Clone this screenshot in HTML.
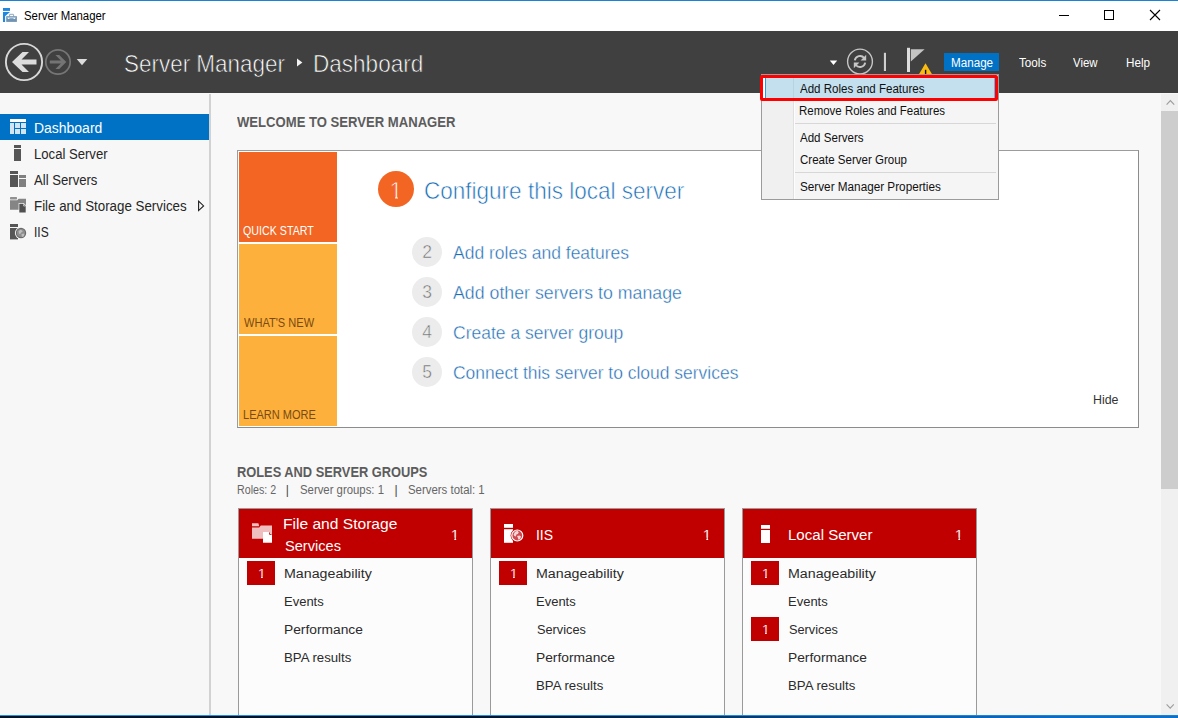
<!DOCTYPE html>
<html lang="en"><head><meta charset="utf-8">
<title>Server Manager</title>
<style>
html,body{margin:0;padding:0;background:#f8f8f8;overflow:hidden}
#app{position:relative;width:1178px;height:718px;overflow:hidden;background:#f8f8f8;font-family:"Liberation Sans",sans-serif}
#app div,#app svg{position:absolute}
.t{position:absolute;transform-origin:0 0;white-space:nowrap;line-height:1;font-family:"Liberation Sans",sans-serif}
/* window chrome */
#topline{left:0;top:0;width:1178px;height:1px;background:#1883d7}
#titlebar{left:0;top:1px;width:1178px;height:30px;background:#fff}
#header{left:0;top:31px;width:1178px;height:62px;background:#404040}
#manage{left:944px;top:53px;width:55px;height:18px;background:#0072c6}
/* sidebar */
#side{left:0;top:94px;width:209px;height:621px;background:#f7f7f7}
#sidesel{left:0;top:114px;width:209px;height:26px;background:#0072c6}
#sideline{left:209px;top:94px;width:2px;height:621px;background:#d2d2d2}
/* main */
#welcome{left:237px;top:150px;width:900px;height:276px;background:#fff;border:1px solid #9c9c9c;border-right-color:#8c8c8c;border-bottom-color:#8c8c8c}
.q{left:239px;width:98px;height:90px}
#q1{top:152px;background:#f26522}
#q2{top:244px;background:#fdb03b}
#q3{top:336px;background:#fdb03b}
.c{border-radius:50%}
#c1{left:378px;top:171px;width:36px;height:36px;background:#f26522}
.cn{left:412px;width:30px;height:30px;background:#ececec}
/* tiles */
.tile{top:508px;width:233px;height:220px;background:#fcfcfc;border:1px solid #9a9a9a}
.th{top:509px;width:233px;height:49px;background:#c00000}
.bd{width:28px;height:24px;background:#c00000}
/* scrollbar */
#sb{left:1161px;top:94px;width:17px;height:621px;background:#f0f0f0}
#sbt{left:1161px;top:111px;width:17px;height:378px;background:#cdcdcd}
/* bottom strip */
#b1{left:0;top:715px;width:1178px;height:1px;background:linear-gradient(90deg,#2b8ce0 0,#2b8ce0 55%,#1a7fd6 100%)}
#b2{left:0;top:716px;width:1178px;height:2px;background:linear-gradient(90deg,#00132b 0,#00142d 40%,#02284f 55%,#054685 68%,#0860b0 80%,#0a6cc4 90%,#0b70ca 100%)}
/* dropdown */
#menu{left:761px;top:74px;width:236px;height:124px;background:#f5f5f5;border:1px solid #9b9b9b}
#mgutbg{left:762px;top:75px;width:31px;height:124px;background:#f0f0f0}
#mgut{left:793px;top:75px;width:1px;height:124px;background:#e0e0e0}
#mgut2{left:794px;top:75px;width:1px;height:124px;background:#fdfdfd}
#mhlw{left:763px;top:78px;width:3px;height:20px;background:#fff}
#mhl{left:765px;top:78px;width:228px;height:20px;background:#c4dfee;border-left:1px solid #26a0da;border-right:1px solid #58b8f0}
#mhlg{left:793px;top:78px;width:1px;height:20px;background:#b4d3e4}
.ms{left:795px;width:201px;height:1px;background:#d7d7d7}
#mred{left:760px;top:75px;width:232px;height:20px;border:3px solid #fe0000;border-radius:2px}

</style></head>
<body>
<div id="app">
<!-- window chrome -->
<div id="topline"></div>
<div id="titlebar"></div>
<div id="header"></div>
<div id="manage"></div>

<!-- sidebar -->
<div id="side"></div>
<div id="sidesel"></div>
<div id="sideline"></div>

<!-- welcome panel -->
<div id="welcome"></div>
<div class="q" id="q1"></div>
<div class="q" id="q2"></div>
<div class="q" id="q3"></div>
<div class="c" id="c1"></div>
<div class="c cn" style="top:237px"></div>
<div class="c cn" style="top:277px"></div>
<div class="c cn" style="top:317px"></div>
<div class="c cn" style="top:357px"></div>

<!-- role tiles -->
<div class="tile" style="left:238px"></div>
<div class="tile" style="left:490px"></div>
<div class="tile" style="left:742px"></div>
<div class="th" style="left:239px"></div>
<div class="th" style="left:491px"></div>
<div class="th" style="left:743px"></div>
<div class="bd" style="left:247px;top:561px"></div>
<div class="bd" style="left:499px;top:561px"></div>
<div class="bd" style="left:751px;top:561px"></div>
<div class="bd" style="left:751px;top:617px"></div>

<!-- scrollbar -->
<div id="sb"></div>
<div id="sbt"></div>

<!-- bottom strip -->
<div id="b1"></div>
<div id="b2"></div>

<!-- icons -->
<svg id="icons" width="1178" height="718" viewBox="0 0 1178 718" style="left:0;top:0">
  <!-- title bar app icon -->
  <g>
    <rect x="3" y="8" width="7" height="2.9" fill="#1e88e0"/>
    <path d="M3 11.9h7l-4.7 4H5.1v6H3z" fill="#1e88e0"/>
    <rect x="6.2" y="16.2" width="10.7" height="5.7" fill="#6f93b3"/>
    <path d="M9.6 16.4v-1.7q0-.4.4-.4h3.2q.4 0 .4.4v1.7" fill="none" stroke="#7d9dba" stroke-width="0.9"/>
    <path d="M7.2 17.4h8.6l-.9 1.7h-1.1l-.4-.8H9.6l-.4.8H8.1z" fill="#f4f7fa"/>
  </g>
  <!-- window buttons -->
  <path d="M1059 15.5h10" stroke="#000" stroke-width="1" fill="none"/>
  <rect x="1104.5" y="10.5" width="9" height="9" stroke="#000" stroke-width="1" fill="none"/>
  <path d="M1150 10l10 10M1160 10l-10 10" stroke="#000" stroke-width="1.1" fill="none"/>

  <!-- back -->
  <circle cx="24" cy="62" r="18.1" fill="none" stroke="#d8d8d8" stroke-width="1.9"/>
  <path d="M12 62l10.5-10h6.5l-7.5 7.5h15v5h-15l7.5 7.5h-6.5z" fill="#dcdcdc"/>
  <!-- forward -->
  <circle cx="58" cy="62" r="12.2" fill="none" stroke="#767676" stroke-width="1.7"/>
  <path d="M66.3 62l-7.1-7.1h-3.8l5.5 5.6H49.8v3h11.1l-5.5 5.6h3.8z" fill="#747474"/>
  <!-- history dropdown -->
  <path d="M76.7 59h10.6l-5.3 6.2z" fill="#dcdcdc"/>
  <!-- breadcrumb separator -->
  <path d="M297 58.4l5.4 4-5.4 4z" fill="#f2f2f2"/>

  <!-- header tools -->
  <path d="M829.8 60.6h7.4l-3.7 4.4z" fill="#fff"/>
  <circle cx="860" cy="61.5" r="12.4" fill="none" stroke="#c6c6c6" stroke-width="1.4"/>
  <path d="M854.8 60.4a5.3 5.3 0 0 1 9.4-2.4" fill="none" stroke="#c6c6c6" stroke-width="1.9"/>
  <path d="M866.2 54.8v5.6h-5.6z" fill="#c6c6c6"/>
  <path d="M865.2 62.6a5.3 5.3 0 0 1-9.4 2.4" fill="none" stroke="#c6c6c6" stroke-width="1.9"/>
  <path d="M853.8 68.2v-5.6h5.6z" fill="#c6c6c6"/>
  <rect x="883.9" y="52.8" width="2.1" height="18.2" fill="#cfcfcf"/>
  <rect x="907" y="47.8" width="3" height="24.2" fill="#dedede"/>
  <path d="M910.8 49.2h13.8l-13.8 12.2z" fill="#c4c4c4"/>
  <path d="M925.5 63.3l7 11.7h-14z" fill="#fbbc11"/>
  <rect x="924.9" y="69.8" width="1.4" height="4.4" fill="#111"/>

  <!-- sidebar icons -->
  <g fill="#d3e5f3">
    <rect x="10" y="119" width="16" height="3" fill="#fff"/>
    <rect x="10" y="123" width="4" height="11"/>
    <rect x="15" y="123" width="5" height="5"/>
    <rect x="21" y="123" width="5" height="5"/>
    <rect x="15" y="129" width="5" height="5"/>
    <rect x="21" y="129" width="5" height="5"/>
  </g>
  <g fill="#565656">
    <rect x="14" y="145" width="7" height="3"/>
    <rect x="14" y="149" width="7" height="12"/>
  </g>
  <g>
    <rect x="10" y="171" width="8" height="3" fill="#565656"/>
    <rect x="10" y="175" width="8" height="12" fill="#565656"/>
    <rect x="19" y="175" width="7" height="3" fill="#808080"/>
    <rect x="19" y="179" width="7" height="8" fill="#808080"/>
  </g>
  <g>
    <rect x="10" y="197" width="7" height="2.4" rx="0.6" fill="#919191"/>
    <path d="M10 200.2h7.2l1.4-1.5H26v11H10z" fill="#858585"/>
    <path d="M18.6 203h5l2.8 2.8v7.4h-7.8z" fill="#f7f7f7"/>
    <path d="M19.3 203.7h4l2.4 2.4v6.4h-6.4z" fill="#505050"/>
    <path d="M23.6 204.2v1.8h1.8" fill="none" stroke="#e8e8e8" stroke-width="0.7"/>
  </g>
  <g>
    <rect x="10" y="224" width="8" height="3" fill="#565656"/>
    <rect x="10" y="228" width="8" height="11.4" fill="#565656"/>
    <circle cx="21" cy="233" r="6.1" fill="#f7f7f7"/>
    <circle cx="21" cy="233" r="5.2" fill="#6a6a6a"/>
    <circle cx="21" cy="233" r="4.1" fill="#8e8e8e"/>
    <path d="M18.6 231.2l1.8-1.4 1.8.6.4 1.4-1.4.8-1.2 1.6-1-.6zM21.4 234.2l2-.6 1 1-.8 1.8-1.6.6z" fill="#bdbdbd"/>
  </g>
  <path d="M198.6 201.2l5 4.7-5 4.7z" fill="none" stroke="#1f1f1f" stroke-width="1.1"/>

  <!-- tile header icons -->
  <g>
    <path d="M252 523.2h6.4l.8 3h-7.2z" fill="#efbfbf"/>
    <path d="M252 527.4h7.2l1.6-1.8H272v13.2h-20z" fill="#efbfbf"/>
    <path d="M263 532h6.4l2.6 2.6v8.2h-9z" fill="#fff"/>
    <path d="M269.6 532.4v2h2" fill="none" stroke="#c00000" stroke-width="0.9"/>
  </g>
  <g>
    <rect x="504" y="524" width="9" height="3.8" fill="#fff"/>
    <rect x="504" y="529.2" width="9" height="13.6" fill="#fff"/>
    <circle cx="517.3" cy="535.5" r="6.7" fill="#c00000"/>
    <circle cx="517.3" cy="535.5" r="5.5" fill="#cf4a50" stroke="#fff" stroke-width="1.2"/>
    <path d="M513.6 534.4l1.4-2.6 2.6-1 1.2 1.6-1 1.6-1.4.6-.6 1.8-1.4-.4zM517 536l2.4-.6 1.6 1-.8 2.4-1.8 1-.6-2.2z" fill="#f6d5d6"/>
  </g>
  <g fill="#fff">
    <rect x="761" y="525" width="9" height="3.8"/>
    <rect x="761" y="530" width="9" height="13"/>
  </g>

  <!-- scrollbar arrows -->
  <path d="M1166.6 104.6l3.8-3.9 3.8 3.9" fill="none" stroke="#9d9d9d" stroke-width="1.2"/>
  <path d="M1166.6 704.4l3.6 3.7 3.6-3.7" fill="none" stroke="#9d9d9d" stroke-width="1.1"/>
</svg>

<!-- Manage dropdown -->
<div id="menu"></div>
<div id="mgutbg"></div>
<div id="mgut"></div>
<div id="mgut2"></div>
<div id="mhlw"></div>
<div id="mhl"></div>
<div id="mhlg"></div>
<div class="ms" style="top:123px"></div>
<div class="ms" style="top:172px"></div>
<div id="mred"></div>

<!-- text layer -->
<span class="t" style="left:23.50px;top:10px;font-size:12px;color:#000;transform:scaleX(0.9484);">Server Manager</span>
<span class="t" style="left:123.65px;top:52px;font-size:24px;color:#ffffff;transform:scaleX(0.9354);-webkit-text-stroke:0.65px #404040;">Server Manager</span>
<span class="t" style="left:312.95px;top:52px;font-size:24px;color:#ffffff;transform:scaleX(0.9389);-webkit-text-stroke:0.65px #404040;">Dashboard</span>
<span class="t" style="left:950.80px;top:57px;font-size:12px;color:#fff;transform:scaleX(0.9704);">Manage</span>
<span class="t" style="left:1018.80px;top:57px;font-size:12px;color:#fff;transform:scaleX(0.9745);">Tools</span>
<span class="t" style="left:1072.80px;top:57px;font-size:12px;color:#fff;transform:scaleX(0.9492);">View</span>
<span class="t" style="left:1126.10px;top:57px;font-size:12px;color:#fff;transform:scaleX(0.9758);">Help</span>
<span class="t" style="left:33.89px;top:122px;font-size:13.8px;color:#fff;transform:scaleX(1.0118);">Dashboard</span>
<span class="t" style="left:33.95px;top:148px;font-size:13.8px;color:#262626;transform:scaleX(0.9498);">Local Server</span>
<span class="t" style="left:34.40px;top:174px;font-size:13.8px;color:#262626;transform:scaleX(0.9506);">All Servers</span>
<span class="t" style="left:33.93px;top:200px;font-size:13.8px;color:#262626;transform:scaleX(0.9664);">File and Storage Services</span>
<span class="t" style="left:34.03px;top:226px;font-size:13.8px;color:#262626;transform:scaleX(0.8681);">IIS</span>
<span class="t" style="left:236.70px;top:116px;font-size:13.8px;color:#5c5c5c;font-weight:700;transform:scaleX(0.9489);">WELCOME TO SERVER MANAGER</span>
<span class="t" style="left:236.70px;top:466px;font-size:13.8px;color:#5c5c5c;font-weight:700;transform:scaleX(0.9302);">ROLES AND SERVER GROUPS</span>
<span class="t" style="left:236.70px;top:484px;font-size:12px;color:#666;transform:scaleX(0.8884);">Roles: 2</span>
<span class="t" style="left:285.80px;top:484px;font-size:12px;color:#444;">|</span>
<span class="t" style="left:299.70px;top:484px;font-size:12px;color:#666;transform:scaleX(0.9468);">Server groups: 1</span>
<span class="t" style="left:394.40px;top:484px;font-size:12px;color:#444;">|</span>
<span class="t" style="left:407.90px;top:484px;font-size:12px;color:#666;transform:scaleX(0.9503);">Servers total: 1</span>
<span class="t" style="left:243.00px;top:225px;font-size:12.8px;color:#fff;transform:scaleX(0.8350);">QUICK START</span>
<span class="t" style="left:243.60px;top:317px;font-size:12.8px;color:#7a4a12;transform:scaleX(0.8643);">WHAT&#39;S NEW</span>
<span class="t" style="left:242.74px;top:409px;font-size:12.8px;color:#7a4a12;transform:scaleX(0.8618);">LEARN MORE</span>
<span class="t" style="left:423.66px;top:179px;font-size:24px;color:#1a6fb8;transform:scaleX(0.9383);-webkit-text-stroke:0.6px #fff;">Configure this local server</span>
<span class="t" style="left:452.77px;top:244px;font-size:18.3px;color:#1c6db5;transform:scaleX(0.9567);-webkit-text-stroke:0.38px #fff;">Add roles and features</span>
<span class="t" style="left:452.77px;top:284px;font-size:18.3px;color:#1c6db5;transform:scaleX(0.9710);-webkit-text-stroke:0.38px #fff;">Add other servers to manage</span>
<span class="t" style="left:452.77px;top:324px;font-size:18.3px;color:#1c6db5;transform:scaleX(0.9572);-webkit-text-stroke:0.38px #fff;">Create a server group</span>
<span class="t" style="left:452.77px;top:364px;font-size:18.3px;color:#1c6db5;transform:scaleX(0.9554);-webkit-text-stroke:0.38px #fff;">Connect this server to cloud services</span>
<span class="t" style="left:1092.51px;top:394px;font-size:12.5px;color:#333;transform:scaleX(0.9897);">Hide</span>
<span class="t" style="left:800.20px;top:83px;font-size:12.3px;color:#111;transform:scaleX(0.9391);">Add Roles and Features</span>
<span class="t" style="left:799.27px;top:105px;font-size:12.3px;color:#111;transform:scaleX(0.9332);">Remove Roles and Features</span>
<span class="t" style="left:800.20px;top:132px;font-size:12.3px;color:#111;transform:scaleX(0.9391);">Add Servers</span>
<span class="t" style="left:800.20px;top:154px;font-size:12.3px;color:#111;transform:scaleX(0.9370);">Create Server Group</span>
<span class="t" style="left:800.20px;top:181px;font-size:12.3px;color:#111;transform:scaleX(0.9540);">Server Manager Properties</span>
<span class="t" style="left:283.56px;top:567px;font-size:13.7px;color:#2b2b2b;transform:scaleX(1.0393);">Manageability</span>
<span class="t" style="left:283.65px;top:595px;font-size:13.7px;color:#2b2b2b;transform:scaleX(0.9488);">Events</span>
<span class="t" style="left:283.59px;top:623px;font-size:13.7px;color:#2b2b2b;transform:scaleX(1.0073);">Performance</span>
<span class="t" style="left:283.64px;top:651px;font-size:13.7px;color:#2b2b2b;transform:scaleX(0.9649);">BPA results</span>
<span class="t" style="left:535.56px;top:567px;font-size:13.7px;color:#2b2b2b;transform:scaleX(1.0393);">Manageability</span>
<span class="t" style="left:535.65px;top:595px;font-size:13.7px;color:#2b2b2b;transform:scaleX(0.9488);">Events</span>
<span class="t" style="left:536.60px;top:623px;font-size:13.7px;color:#2b2b2b;transform:scaleX(0.9308);">Services</span>
<span class="t" style="left:535.59px;top:651px;font-size:13.7px;color:#2b2b2b;transform:scaleX(1.0073);">Performance</span>
<span class="t" style="left:535.64px;top:679px;font-size:13.7px;color:#2b2b2b;transform:scaleX(0.9649);">BPA results</span>
<span class="t" style="left:787.56px;top:567px;font-size:13.7px;color:#2b2b2b;transform:scaleX(1.0393);">Manageability</span>
<span class="t" style="left:787.65px;top:595px;font-size:13.7px;color:#2b2b2b;transform:scaleX(0.9488);">Events</span>
<span class="t" style="left:788.60px;top:623px;font-size:13.7px;color:#2b2b2b;transform:scaleX(0.9308);">Services</span>
<span class="t" style="left:787.59px;top:651px;font-size:13.7px;color:#2b2b2b;transform:scaleX(1.0073);">Performance</span>
<span class="t" style="left:787.64px;top:679px;font-size:13.7px;color:#2b2b2b;transform:scaleX(0.9649);">BPA results</span>
<span class="t" style="left:283.49px;top:516px;font-size:15.4px;color:#fff;transform:scaleX(1.0128);">File and Storage</span>
<span class="t" style="left:284.50px;top:538px;font-size:15.4px;color:#fff;transform:scaleX(0.9491);">Services</span>
<span class="t" style="left:535.99px;top:527px;font-size:15.4px;color:#fff;transform:scaleX(0.9059);">IIS</span>
<span class="t" style="left:787.92px;top:527px;font-size:15.4px;color:#fff;transform:scaleX(0.9780);">Local Server</span>
<span class="t" style="left:261.70px;top:567px;width:40px;margin-left:-20px;text-align:center;font-size:13.7px;color:#fff;-webkit-text-stroke:0.15px #c00000;clip-path:polygon(0 0,40px 0,40px 9.59px,21.05px 9.59px,21.05px 40px,19.41px 40px,19.41px 9.59px,0 9.59px);">1</span>
<span class="t" style="left:455.00px;top:527px;width:40px;margin-left:-20px;text-align:center;font-size:15px;color:#fff;-webkit-text-stroke:0.1px #c00000;clip-path:polygon(0 0,40px 0,40px 10.50px,21.16px 10.50px,21.16px 40px,19.36px 40px,19.36px 10.50px,0 10.50px);">1</span>
<span class="t" style="left:513.70px;top:567px;width:40px;margin-left:-20px;text-align:center;font-size:13.7px;color:#fff;-webkit-text-stroke:0.15px #c00000;clip-path:polygon(0 0,40px 0,40px 9.59px,21.05px 9.59px,21.05px 40px,19.41px 40px,19.41px 9.59px,0 9.59px);">1</span>
<span class="t" style="left:707.00px;top:527px;width:40px;margin-left:-20px;text-align:center;font-size:15px;color:#fff;-webkit-text-stroke:0.1px #c00000;clip-path:polygon(0 0,40px 0,40px 10.50px,21.16px 10.50px,21.16px 40px,19.36px 40px,19.36px 10.50px,0 10.50px);">1</span>
<span class="t" style="left:765.70px;top:567px;width:40px;margin-left:-20px;text-align:center;font-size:13.7px;color:#fff;-webkit-text-stroke:0.15px #c00000;clip-path:polygon(0 0,40px 0,40px 9.59px,21.05px 9.59px,21.05px 40px,19.41px 40px,19.41px 9.59px,0 9.59px);">1</span>
<span class="t" style="left:765.70px;top:623px;width:40px;margin-left:-20px;text-align:center;font-size:13.7px;color:#fff;-webkit-text-stroke:0.15px #c00000;clip-path:polygon(0 0,40px 0,40px 9.59px,21.05px 9.59px,21.05px 40px,19.41px 40px,19.41px 9.59px,0 9.59px);">1</span>
<span class="t" style="left:959.00px;top:527px;width:40px;margin-left:-20px;text-align:center;font-size:15px;color:#fff;-webkit-text-stroke:0.1px #c00000;clip-path:polygon(0 0,40px 0,40px 10.50px,21.16px 10.50px,21.16px 40px,19.36px 40px,19.36px 10.50px,0 10.50px);">1</span>
<span class="t" style="left:396.00px;top:179px;width:40px;margin-left:-20px;text-align:center;font-size:24px;color:#fff;-webkit-text-stroke:0.8px #f26522;clip-path:polygon(0 0,40px 0,40px 16.80px,21.85px 16.80px,21.85px 40px,18.97px 40px,18.97px 16.80px,0 16.80px);">1</span>
<span class="t" style="left:427.00px;top:244px;width:40px;margin-left:-20px;text-align:center;font-size:17.5px;color:#6f6f6f;-webkit-text-stroke:0.5px #ececec;">2</span>
<span class="t" style="left:427.00px;top:284px;width:40px;margin-left:-20px;text-align:center;font-size:17.5px;color:#6f6f6f;-webkit-text-stroke:0.5px #ececec;">3</span>
<span class="t" style="left:427.00px;top:324px;width:40px;margin-left:-20px;text-align:center;font-size:17.5px;color:#6f6f6f;-webkit-text-stroke:0.5px #ececec;">4</span>
<span class="t" style="left:427.00px;top:364px;width:40px;margin-left:-20px;text-align:center;font-size:17.5px;color:#6f6f6f;-webkit-text-stroke:0.5px #ececec;">5</span>
</div>
</body></html>
